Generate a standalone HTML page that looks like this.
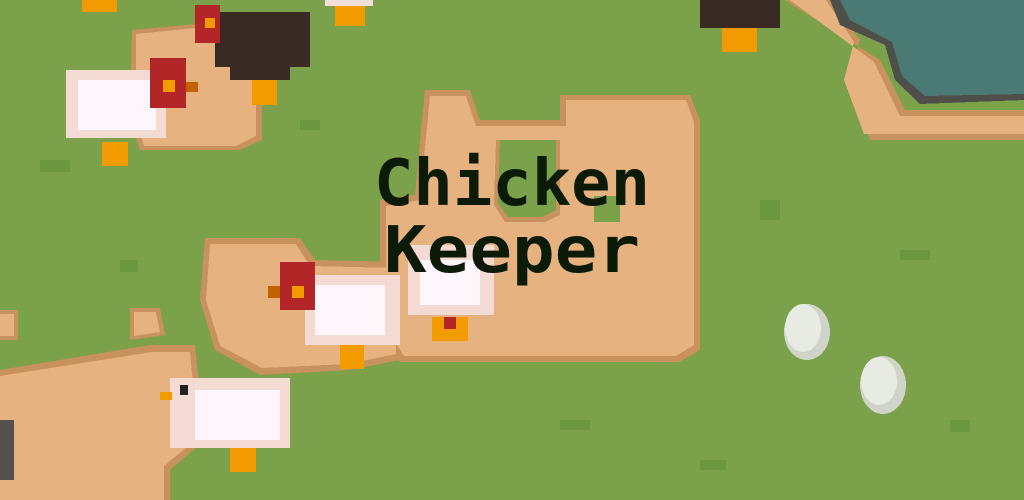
<!DOCTYPE html><html><head><style>html,body{margin:0;padding:0;overflow:hidden;background:#7aa24a}svg{display:block}</style></head><body>
<svg width="1024" height="500" viewBox="0 0 1024 500" xmlns="http://www.w3.org/2000/svg" shape-rendering="crispEdges">
<rect width="1024" height="500" fill="#7ba24b"/>
<g fill="#6c963f">
<rect x="40" y="160" width="30" height="12"/><rect x="300" y="120" width="20" height="10"/><rect x="560" y="420" width="30" height="10"/><rect x="760" y="200" width="20" height="20"/><rect x="900" y="250" width="30" height="10"/><rect x="120" y="260" width="18" height="12"/><rect x="700" y="460" width="26" height="10"/><rect x="950" y="420" width="20" height="12"/>
</g>
<g fill="#c8925e">
<polygon points="132,30 240,20 262,40 262,140 240,150 140,150 130,120"/>
<polygon points="425,90 470,90 480,120 560,120 560,95 690,95 700,120 700,350 680,362 400,362 380,330 380,200 415,195"/>
<polygon points="205,238 300,238 315,260 400,262 400,360 350,370 260,375 215,350 200,300"/>
<polygon points="0,370 150,345 195,345 205,440 170,470 170,500 0,500"/>
<polygon points="785,0 830,0 860,40 850,80 870,140 1024,140 1024,110 905,110 880,60"/>
<polygon points="130,308 160,308 165,335 130,340"/>
<polygon points="0,310 18,310 18,340 0,340"/>
</g>
<g fill="#e6b380">
<polygon points="136,34 236,24 256,42 256,136 236,146 144,146 136,120"/>
<polygon points="430,96 466,96 476,126 566,126 566,100 686,100 694,122 694,345 676,356 404,356 386,328 386,206 420,200"/>
<polygon points="210,244 296,244 310,266 396,268 396,354 348,364 262,368 220,346 206,300"/>
<polygon points="0,376 152,352 190,352 198,438 164,466 164,500 0,500"/>
<polygon points="790,0 826,0 854,42 844,80 864,134 1024,134 1024,116 900,116 874,62"/>
<polygon points="134,312 156,312 160,332 134,336"/>
<polygon points="0,314 14,314 14,336 0,336"/>
</g>
<polygon points="496,140 560,140 560,215 545,222 505,222 494,205" fill="#c8925e"/>
<polygon points="500,140 556,140 556,210 542,217 508,217 498,203" fill="#7ba24b"/>
<polygon points="594,196 620,196 620,222 594,222" fill="#7ba24b"/>
<!-- pond -->
<polygon points="830,0 1024,0 1024,100 920,104 895,80 885,45 840,25" fill="#4f4f4a"/>
<polygon points="840,0 1024,0 1024,94 925,96 902,76 892,42 850,20" fill="#4b7a74"/>
<rect x="0" y="420" width="14" height="60" fill="#55524e"/>
<g><rect x="215" y="12" width="95" height="55" fill="#3a2a24"/><rect x="230" y="55" width="60" height="25" fill="#3a2a24"/><rect x="195" y="5" width="25" height="38" fill="#b22628"/><rect x="205" y="18" width="10" height="10" fill="#f19b00"/><rect x="252" y="80" width="25" height="25" fill="#f19b00"/></g>
<g><rect x="700" y="0" width="80" height="28" fill="#3a2a24"/><rect x="722" y="28" width="35" height="24" fill="#f19b00"/></g>
<rect x="82" y="0" width="35" height="12" fill="#f19b00"/>
<rect x="335" y="0" width="30" height="26" fill="#f19b00"/><rect x="325" y="0" width="48" height="6" fill="#f3dfd8"/>
<g><rect x="66" y="70" width="100" height="68" fill="#f3dad2"/><rect x="78" y="80" width="78" height="50" fill="#fff6fc"/><rect x="150" y="58" width="36" height="50" fill="#b22628"/><rect x="163" y="80" width="12" height="12" fill="#f19b00"/><rect x="186" y="82" width="12" height="10" fill="#c06200"/><rect x="102" y="142" width="26" height="24" fill="#f19b00"/></g>
<g><rect x="305" y="275" width="95" height="70" fill="#f3dad2"/><rect x="315" y="285" width="70" height="50" fill="#fff6fc"/><rect x="280" y="262" width="35" height="48" fill="#b22628"/><rect x="292" y="286" width="12" height="12" fill="#f19b00"/><rect x="268" y="286" width="12" height="12" fill="#c06200"/><rect x="340" y="345" width="24" height="24" fill="#f19b00"/></g>
<g><rect x="408" y="245" width="86" height="70" fill="#f3dad2"/><rect x="420" y="260" width="60" height="45" fill="#fff6fc"/><rect x="432" y="317" width="36" height="24" fill="#f19b00"/><rect x="444" y="317" width="12" height="12" fill="#b22628"/></g>
<g><rect x="170" y="378" width="120" height="70" fill="#f3dad2"/><rect x="195" y="390" width="85" height="50" fill="#fff6fc"/><rect x="180" y="385" width="8" height="10" fill="#222"/><rect x="160" y="392" width="12" height="8" fill="#f19b00"/><rect x="230" y="448" width="26" height="24" fill="#f19b00"/></g>
<ellipse cx="807" cy="332" rx="23" ry="28" fill="#cfd3c8"/><ellipse cx="803" cy="328" rx="18" ry="24" fill="#e8ebe2"/>
<ellipse cx="883" cy="385" rx="23" ry="29" fill="#cfd3c8"/><ellipse cx="879" cy="381" rx="18" ry="24" fill="#e8ebe2"/>
<text x="374" y="205" font-family="DejaVu Sans Mono, monospace" font-weight="bold" font-size="64" fill="#0c1a08" textLength="276" lengthAdjust="spacingAndGlyphs">Chicken</text>
<text x="384" y="272" font-family="DejaVu Sans Mono, monospace" font-weight="bold" font-size="64" fill="#0c1a08" textLength="256" lengthAdjust="spacingAndGlyphs">Keeper</text>
</svg>
</body></html>
